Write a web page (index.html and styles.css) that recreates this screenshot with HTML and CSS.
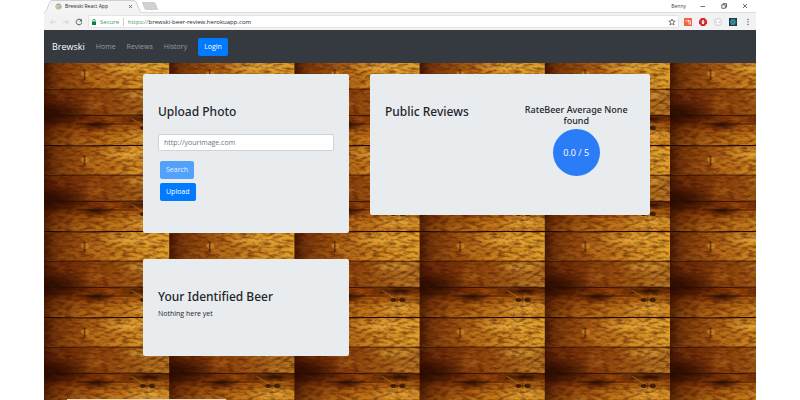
FILE: index.html
```html
<!DOCTYPE html>
<html lang="en">
<head>
<meta charset="utf-8">
<title>Brewski React App</title>
<link rel="stylesheet" href="styles.css">
</head>
<body>
<div class="window">
  <div class="tabs">
    <div class="tab">
      <svg class="tab-shape" viewBox="0 0 100 13" preserveAspectRatio="none"><path d="M0 13Q2 12 3 9L6 2Q6.500 .5 8 .5H91Q93 .5 94 2L98 11Q99 13 100 13" fill="#f4f4f4" stroke="#bcbcbc" stroke-width=".7"/></svg>
      <svg class="favicon" viewBox="0 0 8 8"><circle cx="4" cy="4" r="3" fill="#e7eee8" stroke="#8aa49b"/><path d="M2.500 2.500H5V6H2.500Z" fill="#e6b44a"/><path d="M5 3.500H6V5H5M2.500 2Q4 1 5 2" fill="none" stroke="#59868b" stroke-width=".6"/></svg>
      <span class="tab-name">Brewski React App</span>
      <svg class="tab-close" viewBox="0 0 5 5"><path d="M1 1 4 4M4 1 1 4" stroke="#555" stroke-width=".8"/></svg>
    </div>
    <svg class="new-tab" viewBox="0 0 16 8"><path d="M.5.500H12Q13 .5 13.500 2L15.500 7.500H4Q3 7.500 2.500 6Z" fill="#d2d2d2" stroke="#bbb" stroke-width=".6"/></svg>
    <div class="controls">
      <span class="user">Benny</span>
      <svg viewBox="0 0 8 8"><path d="M1.500 4.500H6" stroke="#333" stroke-width=".7"/></svg>
      <svg viewBox="0 0 8 8"><path d="M1.800 2.800H5.300V6.300H1.800ZM3 2.800V1.600H6.500V5.200H5.300" fill="none" stroke="#333" stroke-width=".7"/></svg>
      <svg viewBox="0 0 8 8"><path d="M2 2 6 6M6 2 2 6" stroke="#333" stroke-width=".7"/></svg>
    </div>
  </div>
  <div class="toolbar">
    <svg viewBox="0 0 8 8"><path d="M7 4H1.500M4 1.500 1.500 4 4 6.500" fill="none" stroke="#ccc" stroke-width=".8"/></svg>
    <svg viewBox="0 0 8 8"><path d="M1 4H6.500M4 1.500 6.500 4 4 6.500" fill="none" stroke="#ccc" stroke-width=".8"/></svg>
    <svg viewBox="0 0 8 8"><path d="M6.200 2.200A2.800 2.800 0 1 0 6.800 4.500" fill="none" stroke="#555"/><path d="M7 .8V3.500H4.300Z" fill="#555"/></svg>
    <div class="address">
      <svg class="lock" viewBox="0 0 6 8"><path d="M1 3.500H5V7H1Z" fill="#0b8043"/><path d="M1.800 3.500V2.500A1.200 1.200 0 0 1 4.200 2.500V3.500" fill="none" stroke="#0b8043" stroke-width=".8"/></svg>
      <span class="secure">Secure</span>
      <span class="url"><span class="scheme">https://</span>brewski-beer-review.herokuapp.com</span>
      <svg class="star" viewBox="0 0 8 8"><path d="M4 1 4.900 3.100 7.200 3.200 5.400 4.700 6.100 7 4 5.700 1.900 7 2.600 4.700.8 3.200 3.100 3.100Z" fill="none" stroke="#444" stroke-width=".7"/></svg>
    </div>
    <div class="extensions">
      <svg viewBox="0 0 8 8"><path d="M0 0H8V8H0Z" fill="#f06548"/><path d="M1.500 2 3 3.500 4.500 2V4L6.500 2M5 4.500V6.500M6.500 3.500V6.500" fill="none" stroke="#fff" stroke-width=".8"/></svg>
      <svg viewBox="0 0 8 8"><path d="M2.400 0H5.600L8 2.400V5.600L5.600 8H2.400L0 5.600V2.400Z" fill="#d8232e"/><ellipse cx="4" cy="4" rx="1.300" ry="2.300" fill="#fff"/><path d="M4 1.500V4.500" stroke="#d8232e" stroke-width=".5"/></svg>
      <svg viewBox="0 0 8 8"><circle cx="4" cy="4" r="3.500" fill="#fafafa" stroke="#bbb" stroke-width=".7"/><path d="M2.500 3.500V5M5.500 3.500V5" stroke="#bbb" stroke-width=".8"/></svg>
      <svg viewBox="0 0 8 8"><path d="M0 0H8V8H0Z" fill="#173a42"/><g fill="none" stroke="#61bfd0" stroke-width=".5"><ellipse cx="4" cy="4" rx="3.200" ry="1.200"/><ellipse cx="4" cy="4" rx="3.200" ry="1.200" transform="rotate(60 4 4)"/><ellipse cx="4" cy="4" rx="3.200" ry="1.200" transform="rotate(120 4 4)"/></g></svg>
      <svg viewBox="0 0 8 8"><g fill="#555"><circle cx="4" cy="1.500" r=".7"/><circle cx="4" cy="4" r=".7"/><circle cx="4" cy="6.500" r=".7"/></g></svg>
    </div>
  </div>
  <nav class="navbar">
    <a class="brand" href="#">Brewski</a>
    <a href="#">Home</a>
    <a href="#">Reviews</a>
    <a href="#">History</a>
    <button class="button" type="button">Login</button>
  </nav>
  <main class="page">
    <svg class="wood" aria-hidden="true">
      <defs>
        <linearGradient id="shade"><stop offset="0" stop-color="#280700" stop-opacity=".7"/><stop offset=".12" stop-color="#421000" stop-opacity=".4"/><stop offset=".42" stop-color="#662100" stop-opacity=".18"/><stop offset=".75" stop-color="#a04c00" stop-opacity="0"/></linearGradient>
        <linearGradient id="top" x2="1" y2="0"><stop offset="0" stop-color="#984a0b"/><stop offset=".4" stop-color="#bf7018"/><stop offset="1" stop-color="#e0a02a"/></linearGradient>
        <linearGradient id="middle"><stop offset="0" stop-color="#7b3108"/><stop offset=".5" stop-color="#944a0d"/><stop offset="1" stop-color="#b57422"/></linearGradient>
        <linearGradient id="bottom" x2=".4" y2="1"><stop offset="0" stop-color="#652305"/><stop offset=".4" stop-color="#984709"/><stop offset="1" stop-color="#c97e19"/></linearGradient>
        <radialGradient id="glow"><stop offset="0" stop-color="#f6c14a" stop-opacity=".6"/><stop offset="1" stop-color="#f6c14a" stop-opacity="0"/></radialGradient>
        <radialGradient id="dark"><stop offset="0" stop-color="#1d0500" stop-opacity=".8"/><stop offset="1" stop-color="#1d0500" stop-opacity="0"/></radialGradient>
        <filter id="grain" x="0" y="0" width="1" height="1" color-interpolation-filters="sRGB"><feTurbulence type="fractalNoise" baseFrequency=".14 .34" numOctaves="5" seed="7"/><feColorMatrix values="0 0 0 0 .25  0 0 0 0 .07  0 0 0 0 0  2.500 0 0 0 -1"/></filter>
        <filter id="light" x="0" y="0" width="1" height="1" color-interpolation-filters="sRGB"><feTurbulence type="fractalNoise" baseFrequency=".05 .14" numOctaves="5" seed="21"/><feColorMatrix values="0 0 0 0 .95  0 0 0 0 .65  0 0 0 0 .2  3 0 0 0 -1.400"/></filter>
        <pattern id="planks" width="125.200" height="86" y="-4" patternUnits="userSpaceOnUse">
          <rect width="126" height="30" fill="url(#top)"/>
          <rect y="30" width="126" height="26" fill="url(#middle)"/>
          <rect y="56" width="126" height="30" fill="url(#bottom)"/>
          <ellipse cx="100" cy="36" rx="24" ry="5" fill="url(#glow)"/>
          <ellipse cx="105" cy="77" rx="34" ry="9" fill="url(#glow)"/>
          <ellipse cx="85" cy="9" rx="40" ry="8" fill="url(#glow)"/>
          <rect width="126" height="86" filter="url(#light)" opacity=".3"/>
          <rect width="126" height="86" filter="url(#grain)" opacity=".6"/>
          <rect width="126" height="86" fill="url(#shade)"/>
          <ellipse cx="12" cy="55" rx="38" ry="16" fill="url(#dark)"/>
          <ellipse cx="53" cy="66" rx="20" ry="6" fill="url(#dark)"/>
          <ellipse cx="105" cy="60" rx="32" ry="6" fill="url(#dark)"/>
          <path d="M0 .5 36 1 84 .4 126 .6" fill="none" stroke="#200700" stroke-width="1.200"/>
          <path d="M0 30.500 50 30 126 30.300" fill="none" stroke="#331000" stroke-width=".8"/>
          <path d="M0 56 58 56.500 90 56 126 57M32 65H90" fill="none" stroke="#2a0b00" stroke-width=".8"/>
          <path d="M87 59 98 66" stroke="#d88b25" stroke-width=".8" opacity=".7"/>
          <path d="M107 49 122 39" stroke="#4c2404" stroke-width="2" opacity=".4"/>
          <ellipse cx="41" cy="15" rx="4" ry="3" fill="#e4a037" opacity=".5"/>
          <path d="M40.500 11V21" stroke="#371000" stroke-width="1.200" opacity=".8"/>
          <path d="M93 69H126M103 66V72" stroke="#321000" stroke-width=".8" opacity=".7"/>
          <ellipse cx="99" cy="69" rx="3" ry="2" fill="#261000" opacity=".75"/>
          <ellipse cx="108" cy="69" rx="3" ry="2.500" fill="#261000" opacity=".75"/>
        </pattern>
      </defs>
      <rect width="100%" height="100%" fill="url(#planks)"/>
    </svg>
    <div class="cards">
      <div class="column">
        <section class="card upload">
          <h1><label for="photo">Upload Photo</label></h1>
          <input id="photo" type="text" placeholder="http://yourimage.com">
          <button class="button" type="button" disabled>Search</button>
          <button class="button" type="button">Upload</button>
        </section>
        <section class="card">
          <h2>Your Identified Beer</h2>
          <p>Nothing here yet</p>
        </section>
      </div>
      <section class="card reviews">
        <h2>Public Reviews</h2>
        <div class="rating">
          <h3>RateBeer Average None found</h3>
          <div class="score">0.0 / 5</div>
        </div>
      </section>
    </div>
    <div class="status"></div>
  </main>
</div>
</body>
</html>
```
FILE: styles.css
```css
* {
  box-sizing: border-box;
}

body {
  margin: 0;
  background: #fff;
  color: #212529;
  font: 7px/10px "Open Sans", "Noto Sans", sans-serif;
}

svg {
  display: block;
  flex: none;
}

h1, h2, h3, p {
  margin: 0;
}

h1, h2, h3 {
  font-family: "Noto Sans", "Open Sans", sans-serif;
  font-weight: 500;
}

.window {
  display: flex;
  flex-direction: column;
  width: 89%;
  min-height: 100vh;
  margin: 0 auto;
}

.tabs {
  display: flex;
  align-items: center;
  height: 13px;
  border-bottom: 1px solid #ddd;
  font-size: 5px;
}

.tab {
  position: relative;
  display: flex;
  align-items: center;
  gap: 3px;
  width: 98px;
  height: 13px;
  padding: 0 9px 0 11px;
}

.tab-shape {
  position: absolute;
  inset: 0;
  width: 100%;
  height: 100%;
}

.favicon, .tab-name, .tab-close {
  position: relative;
}

.favicon {
  width: 7px;
}

.tab-close {
  width: 5px;
  margin-left: auto;
}

.new-tab {
  width: 16px;
}

.controls {
  display: flex;
  align-items: center;
  gap: 13px;
  margin-left: auto;
  padding-right: 7px;
}

.controls svg {
  width: 8px;
}

.user {
  color: #444;
}

.toolbar {
  display: flex;
  align-items: center;
  gap: 5px;
  height: 17px;
  padding: 0 4px 0 5px;
  background: #f2f2f2;
  font-size: 6px;
}

.toolbar svg {
  width: 8px;
}

.address {
  display: flex;
  flex: 1;
  align-items: center;
  height: 13px;
  padding: 0 2px;
  border: 1px solid #e4e4e4;
  border-radius: 1px;
  background: #fff;
}

.address .lock {
  width: 6px;
}

.secure {
  margin: 0 4px 0 3px;
  padding-right: 4px;
  border-right: 1px solid #ccc;
  color: #3d9868;
  line-height: 8px;
}

.scheme {
  color: #3d9868;
}

.star {
  margin-left: auto;
}

.extensions {
  display: flex;
  gap: 7px;
}

.navbar {
  display: flex;
  align-items: center;
  gap: 11px;
  height: 33px;
  padding: 0 8px;
  background: #343a40;
}

.navbar a {
  color: #999c9f;
  text-decoration: none;
}

.navbar .brand {
  color: #fff;
  font-size: 9px;
}

.button {
  height: 18px;
  padding: 0 6px;
  border: 0;
  border-radius: 2px;
  background: #007bff;
  color: #fff;
  font: inherit;
}

.button:disabled {
  background: #52a2fb;
  color: #e1effe;
}

.page {
  position: relative;
  display: flex;
  flex: 1;
  flex-direction: column;
  padding-top: 11px;
  background: #783608;
}

.wood {
  position: absolute;
  inset: 0;
  width: 100%;
  height: 100%;
}

.cards {
  position: relative;
  display: grid;
  grid-template-columns: 206fr 280fr;
  align-items: start;
  gap: 21px;
  margin: 0 106px 0 99px;
}

.column {
  display: grid;
  gap: 26px;
}

.card {
  padding: 30px 15px 37px;
  border-radius: 2px;
  background: #e9ecef;
}

.card h1, .card h2 {
  font-size: 12px;
  line-height: 16px;
}

.card p {
  margin-top: 4px;
}

.upload {
  display: flex;
  flex-direction: column;
  align-items: flex-start;
  gap: 4px;
  padding-bottom: 32px;
}

.upload input {
  width: 100%;
  height: 17px;
  margin: 10px 0 6px;
  padding: 0 5px;
  border: 1px solid #ced4da;
  border-radius: 2px;
  background: #fff;
  font: inherit;
}

.upload input::placeholder {
  color: #6c757d;
}

.upload .button {
  margin-left: 2px;
}

.reviews {
  display: grid;
  grid-template-columns: 1fr 1fr;
  gap: 15px;
  padding-bottom: 39px;
}

.rating {
  text-align: center;
}

.rating h3 {
  font-size: 9px;
  line-height: 11px;
}

.score {
  display: grid;
  place-items: center;
  width: 47px;
  height: 47px;
  margin: 3px auto 0;
  border-radius: 50%;
  background: #2b7df7;
  color: #fff;
  font-size: 9px;
}

.status {
  position: relative;
  width: 159px;
  height: 1px;
  margin: auto 0 0 23px;
  background: #e8dccb;
}
```
